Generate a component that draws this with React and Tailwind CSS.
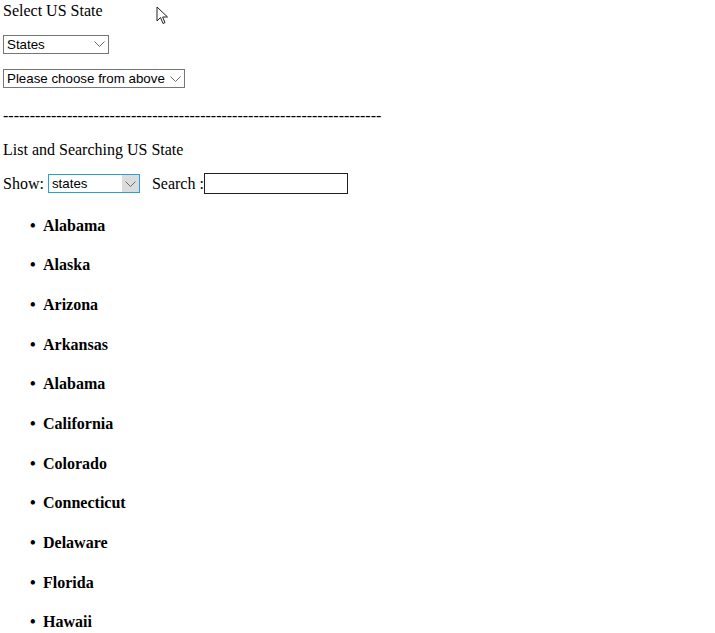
import React from "react";

const Chevron = () => (
  <svg width="11" height="6" viewBox="0 0 11 6" className="block">
    <path d="M0.5 0.5 L5.5 5.5 L10.5 0.5" fill="none" stroke="#6b6b6b" strokeWidth="1" />
  </svg>
);

function FakeSelect({ label, width, hover }) {
  return (
    <div
      className={
        "relative flex items-center h-[19px] box-border border bg-white font-['Liberation_Sans',Arial,sans-serif] text-[13.33px] leading-none text-black " +
        (hover ? "border-[#26a0da]" : "border-[#767676]")
      }
      style={{ width }}
    >
      <span className="pl-[3px] whitespace-nowrap">{label}</span>
      <div
        className={
          "absolute right-0 top-0 bottom-0 w-[17px] flex items-center justify-center " +
          (hover ? "bg-[#dcdcdc]" : "")
        }
      >
        <Chevron />
      </div>
    </div>
  );
}

const states = [
  "Alabama",
  "Alaska",
  "Arizona",
  "Arkansas",
  "Alabama",
  "California",
  "Colorado",
  "Connecticut",
  "Delaware",
  "Florida",
  "Hawaii",
];

export default function App() {
  return (
    <div className="relative h-[633px] overflow-hidden bg-white pl-[3px] pt-[1.5px] font-['Liberation_Serif','Times_New_Roman',serif] text-[16px] leading-[18.4px] text-black">
      <div className="h-[18.4px]">Select US State</div>
      <div className="mt-[15.1px]">
        <FakeSelect label="States" width={106} />
      </div>
      <div className="mt-[15.5px]">
        <FakeSelect label="Please choose from above" width={182} />
      </div>
      <div className="mt-[18.5px] h-[18.4px] whitespace-nowrap">
        -----------------------------------------------------------------------
      </div>
      <div className="mt-[16px] h-[18.4px]">List and Searching US State</div>
      <div className="mt-[13.6px] flex items-center h-[21px]">
        <span className="pt-[1px]">Show:</span>
        <div className="ml-[4px]">
          <FakeSelect label="states" width={92} hover />
        </div>
        <span className="ml-[12px] pt-[1px]">Search :</span>
        <div className="w-[144px] h-[21px] box-border border border-[#1f1f1f] bg-white" />
      </div>
      <ul className="list-none pl-[27px] mt-[22.2px]">
        {states.map((s, i) => (
          <li key={i} className={"flex " + (i > 0 ? "mt-[21.28px]" : "")}>
            <span className="w-[13px] font-bold">•</span>
            <h4 className="font-bold h-[18.4px]">{s}</h4>
          </li>
        ))}
      </ul>
      <svg
        className="absolute left-[156px] top-[6px]"
        width="13"
        height="20"
        viewBox="0 0 13 20"
      >
        <path
          d="M1 1 L1 15 L4.5 11.5 L7 17.5 L9 16.6 L6.6 11 L11.5 11 Z"
          fill="white"
          stroke="#222"
          strokeWidth="1"
          strokeLinejoin="miter"
        />
      </svg>
    </div>
  );
}
